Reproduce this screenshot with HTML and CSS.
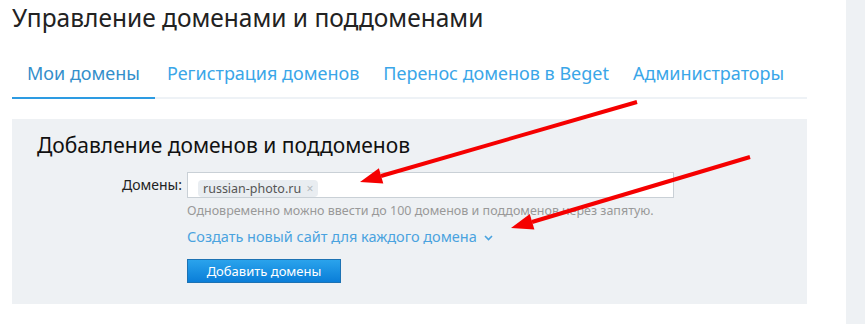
FILE: index.html
```html
<!DOCTYPE html>
<html lang="ru">
<head>
    <meta charset="UTF-8">
    <meta name="viewport" content="width=device-width, initial-scale=1.0">
    <title>Управление доменами и поддоменами</title>
    <link rel="stylesheet" href="styles.css">
</head>
<body>
    <div class="main">
        <h1>Управление доменами и поддоменами</h1>

        <ul class="tabs">
            <li class="active"><a href="#">Мои домены</a></li>
            <li><a href="#">Регистрация доменов</a></li>
            <li><a href="#">Перенос доменов в Beget</a></li>
            <li><a href="#">Администраторы</a></li>
        </ul>

        <div class="panel">
            <h2>Добавление доменов и поддоменов</h2>
            <form class="add-form">
                <label for="domains">Домены:</label>
                <div class="tag-input" id="domains">
                    <span class="tag">russian-photo.ru <span class="tag-x">×</span></span>
                </div>

                <div class="field">
                    <p class="hint">Одновременно можно ввести до 100 доменов и поддоменов через запятую.</p>
                    <a href="#" class="toggle">Создать новый сайт для каждого домена
                        <svg width="9" height="6" viewBox="0 0 9 6"><path d="M1 1l3.5 3.5L8 1" fill="none" stroke="#4aa3df" stroke-width="1.6"/></svg>
                    </a>
                    <button type="button" class="btn">Добавить домены</button>
                </div>
            </form>
        </div>
    </div>
    <div class="side"></div>

    <!-- red arrows from the original screenshot -->
    <svg class="arrows" width="865" height="324">
        <line x1="637" y1="102" x2="381" y2="176" stroke="#f50000" stroke-width="4"/>
        <polygon points="360,182 383.3,183.6 378.9,168.2" fill="#f50000"/>
        <line x1="750" y1="157" x2="532" y2="222" stroke="#f50000" stroke-width="4"/>
        <polygon points="511,228 534.4,229.4 529.8,214" fill="#f50000"/>
    </svg>
</body>
</html>
```
FILE: styles.css
```css
body {
    font-family: "Noto Sans", "Open Sans", sans-serif;
    margin: 0;
    padding: 0;
    background: #fff;
    display: flex;
    height: 324px;
    overflow: hidden;
}
.main {
    width: 795px;
    margin-left: 12px;
    flex-shrink: 0;
}
.side {
    width: 19px;
    margin-left: auto;
    background-color: #eef1f4;
}
h1 {
    margin: 0;
    padding-top: 2px;
    font-size: 24.5px;
    font-weight: normal;
    line-height: 32px;
    color: #222;
    white-space: nowrap;
}
.tabs {
    list-style: none;
    margin: 15px 0 0;
    padding: 0;
    display: flex;
    border-bottom: 2px solid #eef2f6;
}
.tabs li {
    margin-bottom: -2px;
    border-bottom: 2px solid transparent;
    flex-shrink: 0;
}
.tabs li.active {
    border-bottom-color: #2d9be2;
}
.tabs a {
    display: block;
    padding: 0 12px;
    line-height: 48px;
    font-size: 18px;
    color: #3aa6e8;
    text-decoration: none;
    white-space: nowrap;
}
.tabs li:first-child a {
    padding-left: 15px;
    padding-right: 15px;
}
.tabs li.active a {
    color: #348fcb;
}
.panel {
    background-color: #eef1f4;
    margin-top: 20px;
    height: 185px;
    padding: 0 25px;
    box-sizing: border-box;
}
h2 {
    margin: 0;
    padding-top: 13px;
    font-size: 21px;
    font-weight: normal;
    line-height: 26px;
    color: #111;
    white-space: nowrap;
}
.add-form {
    display: grid;
    grid-template-columns: 150px 487px;
    margin-top: 14px;
}
.add-form label {
    text-align: right;
    padding-right: 5px;
    font-size: 14px;
    line-height: 26px;
    color: #222;
}
.tag-input {
    background: #fff;
    border: 1px solid #c9d0d6;
    height: 26px;
    box-sizing: border-box;
    padding: 3px 10px;
}
.tag {
    display: inline-block;
    background: #e9edf1;
    border-radius: 4px;
    padding: 0 5px;
    font-size: 12.5px;
    line-height: 17px;
    color: #555;
}
.tag-x {
    color: #b5b9bd;
    font-size: 12px;
    margin-left: 2px;
}
.field {
    grid-column: 2;
}
.hint {
    margin: 5px 0 0;
    font-size: 12.5px;
    line-height: 16px;
    color: #999;
    white-space: nowrap;
}
.toggle {
    display: inline-block;
    margin-top: 7px;
    font-size: 14.5px;
    line-height: 20px;
    color: #4aa3df;
    text-decoration: none;
    white-space: nowrap;
}
.toggle svg {
    margin-left: 3px;
    vertical-align: middle;
}
.btn {
    display: block;
    margin-top: 12px;
    width: 154px;
    height: 24px;
    background: linear-gradient(#2aa3ec, #0a7ed8);
    border: 1px solid #1c72b3;
    color: #fff;
    font-family: inherit;
    font-size: 13px;
    padding: 0;
    cursor: pointer;
}
.arrows {
    position: absolute;
    left: 0;
    top: 0;
    pointer-events: none;
}
```
